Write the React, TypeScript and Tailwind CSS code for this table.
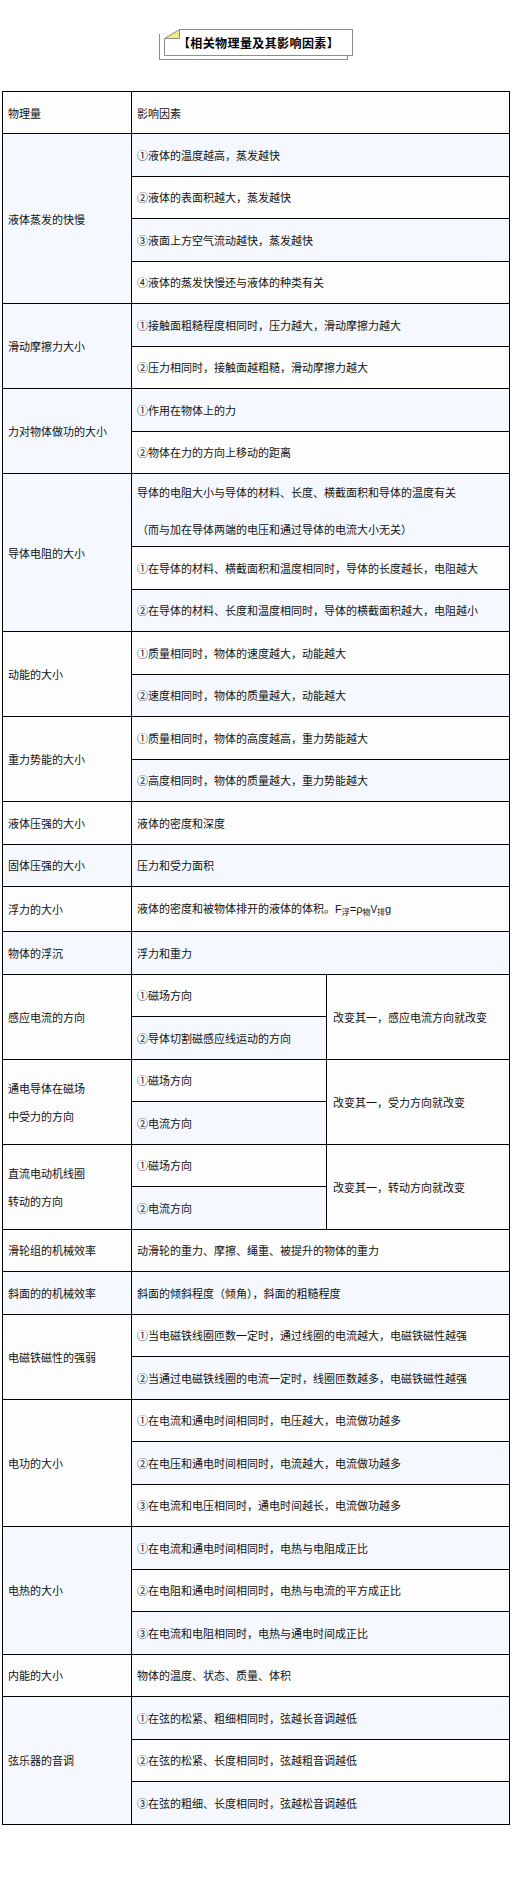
import React from 'react';

type Item = { text: React.ReactNode; h?: string };
type Group = { name: React.ReactNode; items: Item[]; note?: string };

const BLUE = 'bg-[#f5f9ff]';
const WHITE = 'bg-[#fdfdfd]';

const t = (text: React.ReactNode, h?: string): Item => ({ text, h });

const groups: Group[] = [
  {
    name: '液体蒸发的快慢',
    items: [
      t('①液体的温度越高，蒸发越快'),
      t('②液体的表面积越大，蒸发越快'),
      t('③液面上方空气流动越快，蒸发越快'),
      t('④液体的蒸发快慢还与液体的种类有关'),
    ],
  },
  {
    name: '滑动摩擦力大小',
    items: [t('①接触面粗糙程度相同时，压力越大，滑动摩擦力越大'), t('②压力相同时，接触面越粗糙，滑动摩擦力越大')],
  },
  {
    name: '力对物体做功的大小',
    items: [t('①作用在物体上的力'), t('②物体在力的方向上移动的距离')],
  },
  {
    name: '导体电阻的大小',
    items: [
      t(
        <div className="flex flex-col gap-[15px]">
          <span>导体的电阻大小与导体的材料、长度、横截面积和导体的温度有关</span>
          <span>（而与加在导体两端的电压和通过导体的电流大小无关）</span>
        </div>,
        'h-[73px]'
      ),
      t('①在导体的材料、横截面积和温度相同时，导体的长度越长，电阻越大'),
      t('②在导体的材料、长度和温度相同时，导体的横截面积越大，电阻越小'),
    ],
  },
  {
    name: '动能的大小',
    items: [t('①质量相同时，物体的速度越大，动能越大'), t('②速度相同时，物体的质量越大，动能越大')],
  },
  {
    name: '重力势能的大小',
    items: [t('①质量相同时，物体的高度越高，重力势能越大'), t('②高度相同时，物体的质量越大，重力势能越大')],
  },
  { name: '液体压强的大小', items: [t('液体的密度和深度')] },
  { name: '固体压强的大小', items: [t('压力和受力面积')] },
  {
    name: '浮力的大小',
    items: [
      t(
        <span>
          液体的密度和被物体排开的液体的体积。
          <span className="font-['Liberation_Sans',sans-serif] text-[11px]">F</span>
          <sub className="text-[8px]">浮</sub>
          <span className="font-['Liberation_Sans',sans-serif] text-[11px]">=ρ</span>
          <sub className="text-[8px]">物</sub>
          <span className="font-['Liberation_Sans',sans-serif] text-[10px]">V</span>
          <sub className="text-[8px]">排</sub>
          <span className="font-['Liberation_Sans',sans-serif] text-[11px]">g</span>
        </span>,
        'h-[45px]'
      ),
    ],
  },
  { name: '物体的浮沉', items: [t('浮力和重力')] },
  {
    name: '感应电流的方向',
    items: [t('①磁场方向'), t('②导体切割磁感应线运动的方向')],
    note: '改变其一，感应电流方向就改变',
  },
  {
    name: (
      <div className="flex flex-col leading-[28px]">
        <span>通电导体在磁场</span>
        <span>中受力的方向</span>
      </div>
    ),
    items: [t('①磁场方向'), t('②电流方向')],
    note: '改变其一，受力方向就改变',
  },
  {
    name: (
      <div className="flex flex-col leading-[28px]">
        <span>直流电动机线圈</span>
        <span>转动的方向</span>
      </div>
    ),
    items: [t('①磁场方向'), t('②电流方向')],
    note: '改变其一，转动方向就改变',
  },
  { name: '滑轮组的机械效率', items: [t('动滑轮的重力、摩擦、绳重、被提升的物体的重力')] },
  { name: '斜面的的机械效率', items: [t('斜面的倾斜程度（倾角），斜面的粗糙程度')] },
  {
    name: '电磁铁磁性的强弱',
    items: [
      t('①当电磁铁线圈匝数一定时，通过线圈的电流越大，电磁铁磁性越强'),
      t('②当通过电磁铁线圈的电流一定时，线圈匝数越多，电磁铁磁性越强'),
    ],
  },
  {
    name: '电功的大小',
    items: [
      t('①在电流和通电时间相同时，电压越大，电流做功越多'),
      t('②在电压和通电时间相同时，电流越大，电流做功越多'),
      t('③在电流和电压相同时，通电时间越长，电流做功越多'),
    ],
  },
  {
    name: '电热的大小',
    items: [
      t('①在电流和通电时间相同时，电热与电阻成正比'),
      t('②在电阻和通电时间相同时，电热与电流的平方成正比'),
      t('③在电流和电阻相同时，电热与通电时间成正比'),
    ],
  },
  { name: '内能的大小', items: [t('物体的温度、状态、质量、体积')] },
  {
    name: '弦乐器的音调',
    items: [
      t('①在弦的松紧、粗细相同时，弦越长音调越低'),
      t('②在弦的松紧、长度相同时，弦越粗音调越低'),
      t('③在弦的粗细、长度相同时，弦越松音调越低'),
    ],
  },
];

const cell = 'border border-black px-[5px] py-0 align-middle leading-[22px] whitespace-nowrap';

function TitleTag() {
  return (
    <div className="grid pl-[159px]">
      {/* back sheet */}
      <div className="[grid-area:1/1] mt-[5px] w-[189px] h-[26px] border-l border-r border-b border-[#8c8c8c]" />
      {/* front sheet */}
      <div className="[grid-area:1/1] relative ml-[5px] w-[189px] h-[27px] border border-[#8c8c8c] bg-white flex items-center justify-center">
        <svg className="absolute left-[-1px] top-[-1px]" width="16" height="10" viewBox="0 0 16 10">
          <polygon points="0,0 16,0 0,10" fill="#ffffff" />
          <polygon points="0.5,9.5 15.5,0.5 15.5,9.5" fill="#f3ee7a" stroke="#8c8c8c" strokeWidth="1" />
        </svg>
        <span className="text-[12px] font-bold tracking-[0.4px] text-black leading-none">【相关物理量及其影响因素】</span>
      </div>
    </div>
  );
}

export default function App() {
  let idx = 0;
  const rows: React.ReactNode[] = [];

  rows.push(
    <tr key="head" className={`h-[42px] ${WHITE}`}>
      <td className={cell}>物理量</td>
      <td className={cell} colSpan={2}>
        影响因素
      </td>
    </tr>
  );

  groups.forEach((g, gi) => {
    g.items.forEach((it, i) => {
      idx++;
      const bg = idx % 2 === 1 ? BLUE : WHITE;
      rows.push(
        <tr key={`${gi}-${i}`} className={`${it.h ?? 'h-[42.5px]'} ${bg}`}>
          {i === 0 && (
            <td className={cell} rowSpan={g.items.length}>
              {g.name}
            </td>
          )}
          <td className={cell} colSpan={g.note ? 1 : 2}>
            {it.text}
          </td>
          {g.note && i === 0 && (
            <td className={`${cell} pl-[6px]`} rowSpan={g.items.length}>
              {g.note}
            </td>
          )}
        </tr>
      );
    });
  });

  return (
    <div className="min-h-[1883px] bg-white pt-[29px] font-['Noto_Sans_CJK_SC',sans-serif] text-[11px] text-[#111]">
      <TitleTag />
      <div className="pl-[2px] pt-[31px]">
        <table className="w-[507px] table-fixed border-collapse border border-black">
          <colgroup>
            <col className="w-[129px]" />
            <col className="w-[195px]" />
            <col className="w-[183px]" />
          </colgroup>
          <tbody>{rows}</tbody>
        </table>
      </div>
    </div>
  );
}
